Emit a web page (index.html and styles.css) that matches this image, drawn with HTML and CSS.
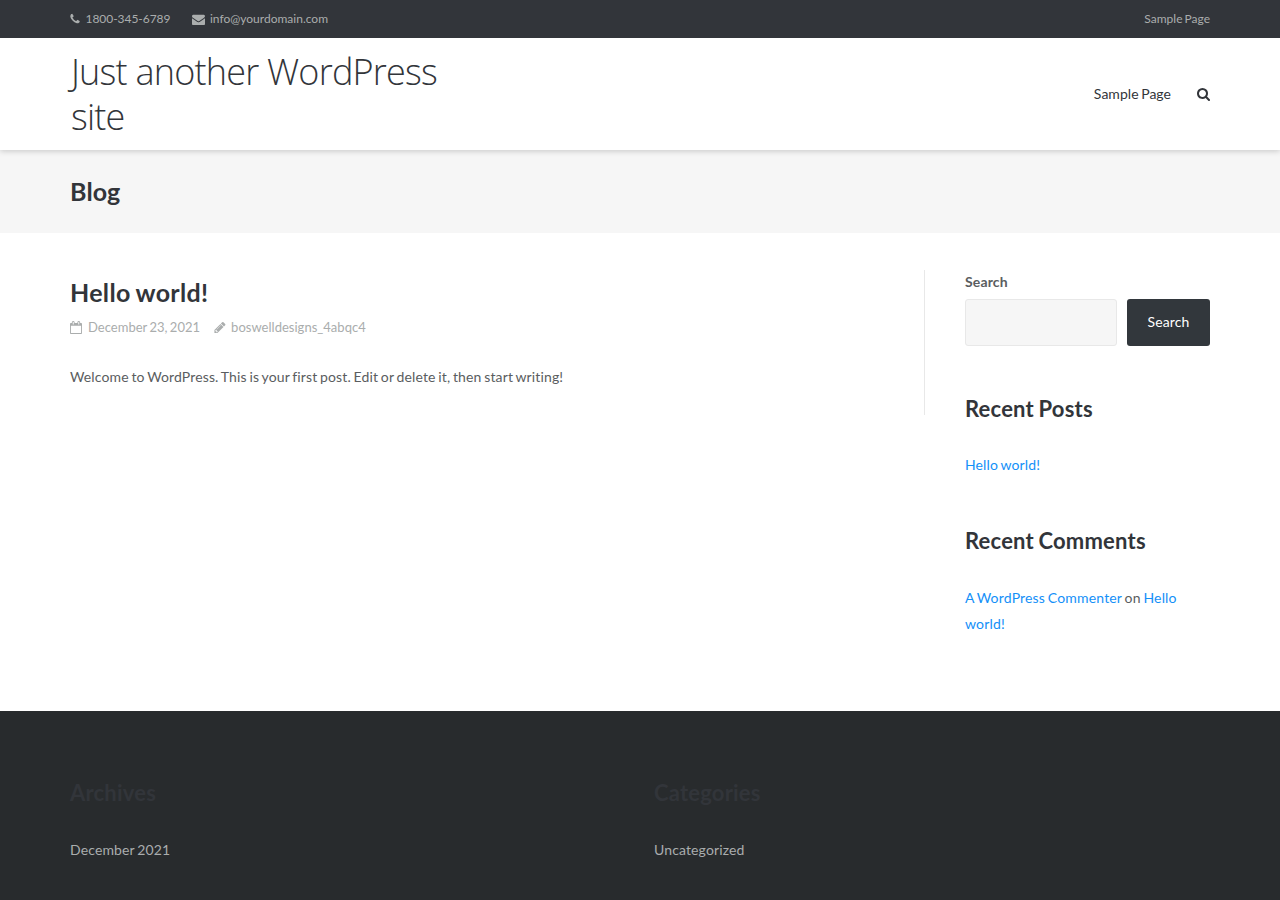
FILE: index.html
```html
<!DOCTYPE html>
<html lang="en">
<head>
<meta charset="utf-8">
<title>Blog</title>
<link rel="stylesheet" href="styles.css">
</head>
<body>
<div class="topbar">
  <div class="container topbar-inner">
    <div class="contact">
      <span class="contact-item"><svg class="icon phone" viewBox="0 0 1408 1792"><path d="M1408 1240q0 27-10 70.500t-21 68.500q-21 50-122 106-94 51-186 51-27 0-53-3.500t-57.500-12.500-47-14.500-55.500-20.500-49-18q-98-35-175-83-127-79-264-216t-216-264q-48-77-83-175-3-9-18-49t-20.500-55.500-14.500-47-12.500-57.500-3.500-53q0-92 51-186 56-101 106-122 25-11 68.500-21t70.500-10q14 0 21 3 18 6 53 76 11 19 30 54t35 63.500 31 53.500q3 4 17.500 25t21.500 35.500 7 28.500q0 20-28.500 50t-62 55-62 53-28.500 46q0 9 5 22.500t8.500 20.500 14 24 11.500 19q76 137 174 235t235 174q2 1 19 11.500t24 14 20.500 8.500 22.500 5q18 0 46-28.500t53-62 55-62 50-28.500q14 0 28.500 7t35.500 21.500 25 17.500q25 15 53.500 31t63.500 35 54 30q70 35 76 53 3 7 3 21z"/></svg>1800-345-6789</span>
      <span class="contact-item"><svg class="icon mail" viewBox="0 0 1792 1792"><path d="M1792 710v794q0 66-47 113t-113 47h-1472q-66 0-113-47t-47-113v-794q44 49 101 87 362 246 497 345 57 42 92.500 65.500t94.500 48 110 24.500h2q51 0 110-24.500t94.500-48 92.500-65.500q170-123 498-345 57-39 100-87zm0-294q0 79-49 151t-122 123q-376 261-468 325-10 7-42.500 30.500t-54 38-52 32.500-57.500 27-50 9h-2q-23 0-50-9t-57.500-27-52-32.500-54-38-42.500-30.500q-91-64-262-182.500t-205-142.500q-62-42-117-115.500t-55-136.500q0-78 41.500-130t118.500-52h1472q65 0 112.500 47t47.500 113z"/></svg>info@yourdomain.com</span>
    </div>
    <a class="top-link">Sample Page</a>
  </div>
</div>
<header class="masthead">
  <div class="container masthead-inner">
    <div class="site-title">Just another WordPress<br>site</div>
    <nav class="nav">
      <a>Sample Page</a>
      <svg class="icon search-icon" viewBox="0 0 1664 1792"><path d="M1152 832q0-185-131.500-316.500t-316.500-131.500-316.500 131.500-131.500 316.500 131.500 316.500 316.500 131.500 316.500-131.500 131.500-316.500zm512 832q0 52-38 90t-90 38q-54 0-90-38l-343-342q-179 124-399 124-143 0-273.500-55.500t-225-150-150-225-55.500-273.500 55.500-273.500 150-225 225-150 273.500-55.500 273.500 55.500 225 150 150 225 55.500 273.500q0 220-124 399l343 343q37 37 37 90z"/></svg>
    </nav>
  </div>
</header>
<div class="page-header"><div class="container"><h1>Blog</h1></div></div>
<div class="container content">
  <main class="main">
    <h2 class="post-title">Hello world!</h2>
    <div class="meta">
      <span class="date"><svg class="icon calendar" viewBox="0 0 1664 1792"><path d="M128 1664h1408v-1024h-1408v1024zm384-1216v-288q0-14-9-23t-23-9h-64q-14 0-23 9t-9 23v288q0 14 9 23t23 9h64q14 0 23-9t9-23zm768 0v-288q0-14-9-23t-23-9h-64q-14 0-23 9t-9 23v288q0 14 9 23t23 9h64q14 0 23-9t9-23zm384-64v1280q0 52-38 90t-90 38h-1408q-52 0-90-38t-38-90v-1280q0-52 38-90t90-38h128v-96q0-66 47-113t113-47h64q66 0 113 47t47 113v96h384v-96q0-66 47-113t113-47h64q66 0 113 47t47 113v96h128q52 0 90 38t38 90z"/></svg>December 23, 2021</span>
      <span class="author"><svg class="icon pencil" viewBox="0 0 1536 1792"><path d="M363 1536l91-91-235-235-91 91v107h128v128h107zm523-928q0-22-22-22-10 0-17 7l-542 542q-7 7-7 17 0 22 22 22 10 0 17-7l542-542q7-7 7-17zm-54-192l416 416-832 832h-416v-416zm683 96q0 53-37 90l-166 166-416-416 166-165q36-38 90-38 53 0 91 38l235 234q37 39 37 91z"/></svg>boswelldesigns_4abqc4</span>
    </div>
    <p class="post-text">Welcome to WordPress. This is your first post. Edit or delete it, then start writing!</p>
  </main>
  <aside class="sidebar">
    <label class="search-label" for="s">Search</label>
    <div class="search-row"><input id="s" class="search-input" type="text"><button class="search-button">Search</button></div>
    <h3>Recent Posts</h3>
    <p class="list-text"><a>Hello world!</a></p>
    <h3>Recent Comments</h3>
    <p class="list-text comment"><a>A WordPress Commenter</a> on <a>Hello world!</a></p>
  </aside>
</div>
<footer class="footer">
  <div class="container footer-grid">
    <section><h3>Archives</h3><p>December 2021</p></section>
    <section><h3>Categories</h3><p>Uncategorized</p></section>
  </div>
</footer>
</body>
</html>
```
FILE: styles.css
```css
* { box-sizing: border-box; }
body { margin: 0; height: 900px; overflow: hidden; background: #fff; color: #5a5d60; font: 14px/26px Lato, sans-serif; letter-spacing: .13px; word-spacing: -1px; }
h1, h2, h3, p { margin: 0; }
.container { width: 1140px; margin: 0 auto; }
.icon { fill: currentColor; flex: none; }
.topbar { height: 38px; background: #32353a; color: #aaadad; font-size: 12px; letter-spacing: 0; }
.topbar-inner { height: 38px; display: flex; justify-content: space-between; align-items: center; }
.contact { display: flex; gap: 21.5px; }
.contact-item { display: flex; align-items: center; }
.contact-item:first-child { letter-spacing: -.04px; }
.phone { width: 10px; height: 12px; margin-right: 5.5px; }
.mail { width: 13px; height: 13px; margin-right: 5px; }
.masthead { position: relative; height: 112px; background: #fff; box-shadow: 0 1px 6px rgba(0,0,0,.2); clip-path: inset(0 0 -10px 0); color: #32353a; }
.masthead-inner { height: 112px; display: flex; justify-content: space-between; align-items: center; }
.site-title { padding-left: 1px; font-family: "Open Sans", sans-serif; font-size: 36px; line-height: 45px; font-weight: 300; letter-spacing: -.78px; word-spacing: 0; white-space: nowrap; }
.nav { display: flex; align-items: center; gap: 26px; letter-spacing: .03px; }
.search-icon { width: 13px; height: 14px; }
.page-header { height: 83px; background: #f6f6f6; }
.page-header h1 { font-size: 25px; line-height: 83px; color: #32353a; }
.content { height: 478px; padding-top: 37px; display: flex; justify-content: space-between; align-items: flex-start; }
.main { width: 855px; height: 145px; border-right: 1px solid #e8e8e8; }
.post-title { font-size: 25px; line-height: 30px; padding-top: 7px; letter-spacing: .32px; color: #32353a; }
.meta { display: flex; gap: 14px; margin-top: 7px; font-size: 13px; letter-spacing: .02px; color: #aaadad; }
.date, .author { display: flex; align-items: center; }
.calendar { width: 12px; height: 13px; margin-right: 6px; }
.pencil { width: 12px; height: 13px; margin-right: 5px; }
.post-text { margin-top: 24px; }
.sidebar { width: 245px; }
.search-label { display: block; height: 29px; font-weight: 700; line-height: 24px; }
.search-row { display: flex; gap: 10px; }
.search-input { width: 152px; height: 47px; border: 1px solid #e8e8e8; border-radius: 3px; background: #f6f6f6; }
.search-button { width: 83px; height: 47px; padding: 0 0 2px; border: 0; border-radius: 3px; background: #32373c; color: #fff; font: 14px Lato, sans-serif; letter-spacing: .12px; }
h3 { color: #32353a; font-size: 22px; line-height: 30px; letter-spacing: .2px; }
.sidebar h3 { margin-top: 48px; }
.list-text { margin-top: 28px; }
.comment { margin-top: 29px; letter-spacing: .17px; }
.sidebar a { color: #1490f8; }
.footer { height: 189px; padding-top: 67px; background: #282b2d; color: #aaadad; }
.footer-grid { display: grid; grid-template-columns: 556px 556px; gap: 28px; }
.footer p { margin-top: 29px; }
```
